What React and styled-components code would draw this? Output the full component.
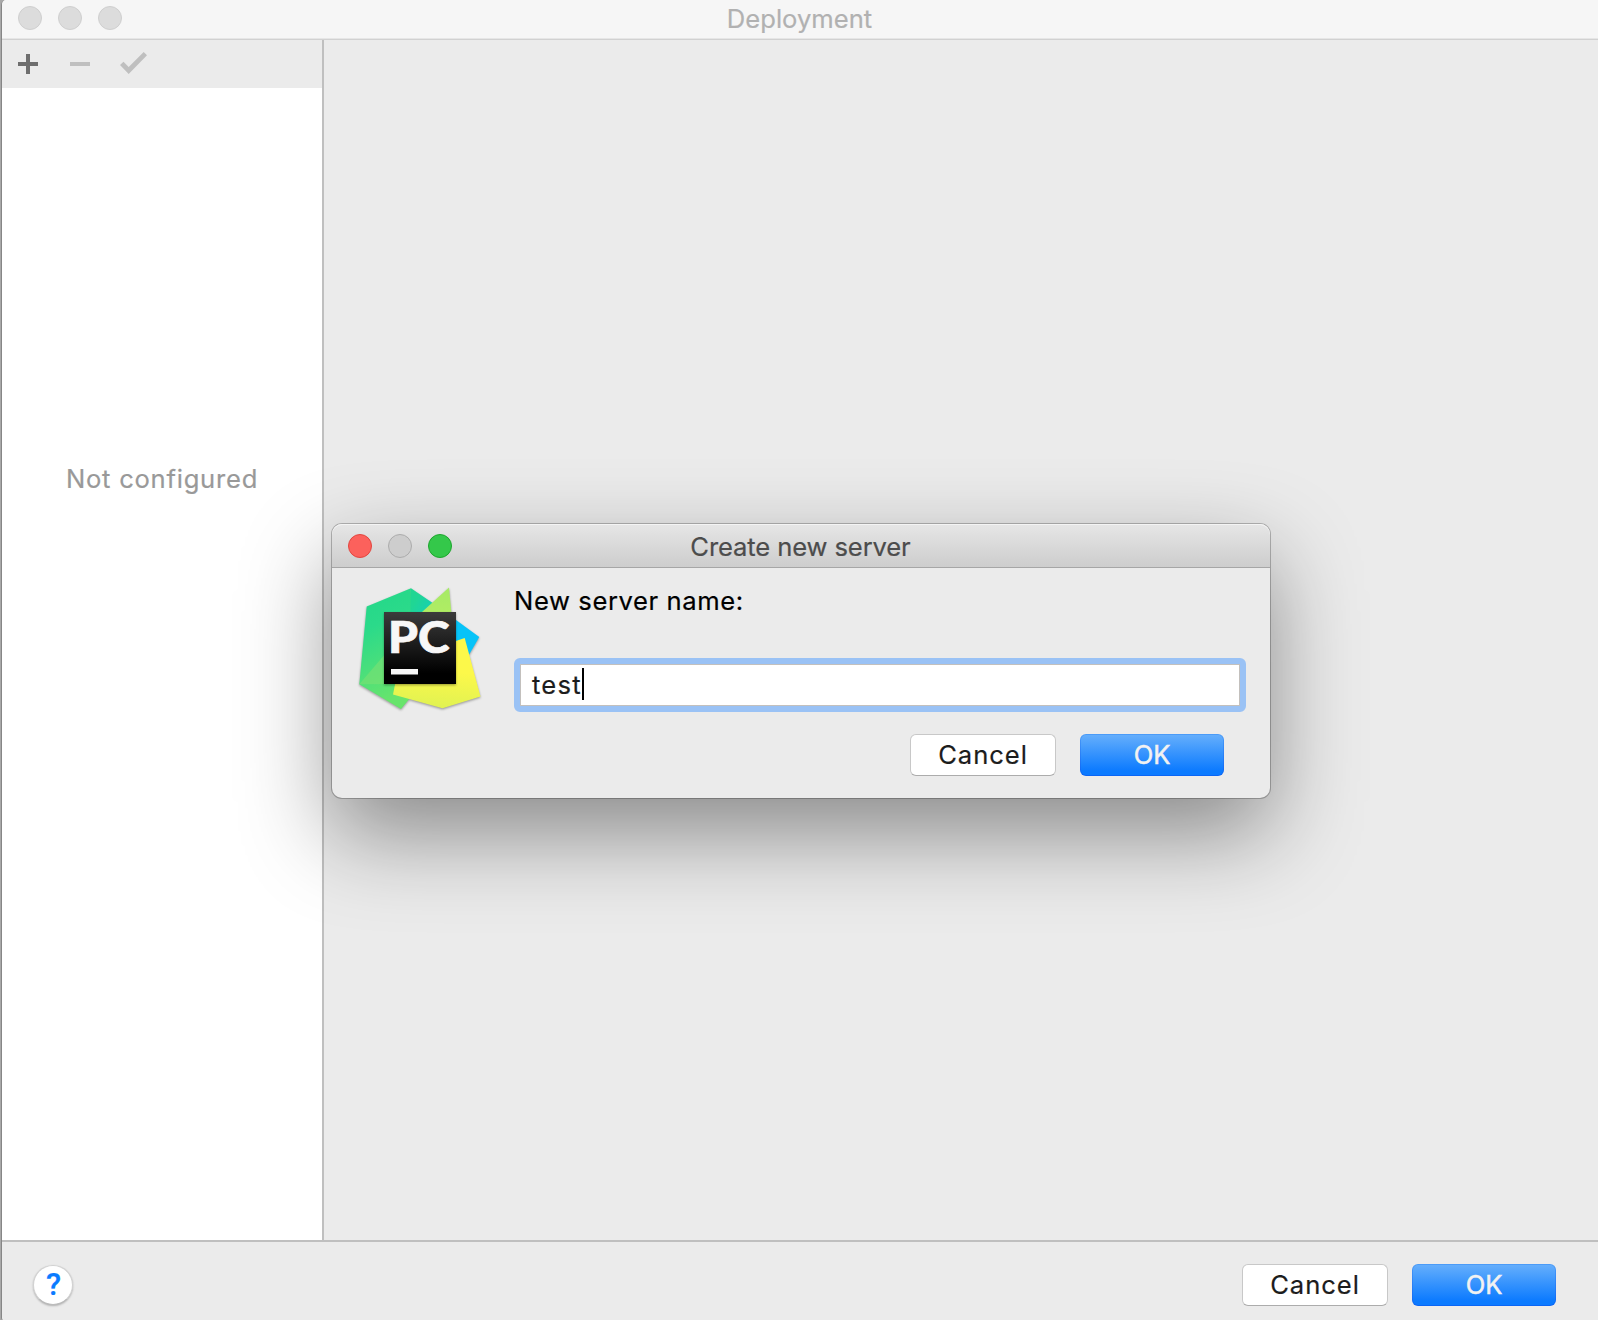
import React from "react";
import styled, { createGlobalStyle, css } from "styled-components";

const GlobalStyle = createGlobalStyle`
  *, *::before, *::after { box-sizing: border-box; }
  body {
    margin: 0;
    background: #a9a9a9;
    font-family: Inter, Roboto, "Liberation Sans", sans-serif;
    font-size: 25.6px;
    font-weight: 400;
    -webkit-text-stroke: 0.2px currentColor;
    color: #000;
    overflow: hidden;
  }
`;

const Desktop = styled.div`
  position: relative;
  height: 1320px;
  padding-left: 1px;
`;

const Window = styled.div`
  display: flex;
  flex-direction: column;
  height: 100%;
  border-left: 1px solid #868686;
  border-radius: 5px 0 0 2px;
  background: #ebebeb;
  overflow: hidden;
`;

const TitleBar = styled.header`
  display: grid;
  grid-template-columns: 1fr auto 1fr;
  align-items: center;
  flex: none;
  height: 40px;
  padding: 0 16px 3px;
  background: #f6f6f6;
  border-bottom: 1px solid #d1d1d1;
  box-shadow: inset 0 -1px 0 #e6e6e6;
`;

const Lights = styled.div`
  display: flex;
  gap: 16px;
`;

const lightColors = {
  inactive: ["#dcdcdc", "#cfcfcf"],
  disabled: ["#cdcdcd", "#acacac"],
  close: ["#fc615c", "#e2463f"],
  zoom: ["#34c84a", "#1da62d"],
};

const Light = styled.span`
  width: 24px;
  height: 24px;
  border-radius: 50%;
  background: ${(p) => lightColors[p.$kind][0]};
  border: 1px solid ${(p) => lightColors[p.$kind][1]};
`;

const Title = styled.h1`
  margin: 0;
  padding: 2px 1px 0 0;
  font-size: 25.6px;
  font-weight: 400;
  line-height: 32px;
  white-space: nowrap;
  letter-spacing: ${(p) => p.$tracking || "0"};
  color: ${(p) => p.$color};
`;

const Content = styled.div`
  display: flex;
  flex: 1;
  min-height: 0;
`;

const Sidebar = styled.aside`
  display: flex;
  flex-direction: column;
  width: 322px;
  background: #fff;
  border-right: 2px solid #bfbfbf;
`;

const Toolbar = styled.div`
  display: flex;
  align-items: center;
  height: 48px;
  padding-left: 13px;
  gap: 22px;
  background: #ebebeb;
`;

const ToolButton = styled.button`
  display: flex;
  padding: 0;
  border: 0;
  background: none;
  color: ${(p) => (p.disabled ? "#bfbfbf" : "#6e6e6e")};
`;

const EmptyText = styled.p`
  margin: 374px 0 0;
  text-align: center;
  line-height: 34px;
  letter-spacing: 0.75px;
  color: #999;
`;

const Footer = styled.footer`
  display: flex;
  align-items: center;
  justify-content: space-between;
  flex: none;
  height: 80px;
  padding: 8px 42px 0 31px;
  border-top: 2px solid #bfbfbf;
`;

const HelpButton = styled.button`
  display: flex;
  align-items: center;
  justify-content: center;
  width: 40px;
  height: 40px;
  padding: 0 0 0 1px;
  border: 1px solid #d2d2d2;
  border-bottom-color: #bbb;
  border-radius: 50%;
  background: #fff;
  box-shadow: 0 1px 2px rgba(0, 0, 0, 0.25);
  font: 500 31px/38px Roboto, Inter, sans-serif;
  color: #0a7bff;
`;

const ButtonRow = styled.div`
  display: flex;
  justify-content: flex-end;
  gap: 24px;
`;

const PushButton = styled.button`
  width: 146px;
  height: 42px;
  padding: 0 0 1px;
  border-radius: 6px;
  border: 1px solid #c8c8c8;
  border-bottom-color: #acacac;
  background: #fff;
  font: 400 25.6px/32px Inter, Roboto, sans-serif;
  letter-spacing: 0.95px;
  -webkit-text-stroke: 0.2px currentColor;
  color: #1c1c1c;
  ${(p) =>
    p.$primary &&
    css`
      width: 144px;
      background: linear-gradient(#64aefc, #0b7aff 90%) padding-box,
        linear-gradient(#4c9cf8, #0964f5) border-box;
      border-color: transparent;
      color: #f2f2f2;
      letter-spacing: -0.2px;
      -webkit-text-stroke-width: 0.5px;
    `}
`;

const Dialog = styled.section`
  position: absolute;
  left: 332px;
  top: 524px;
  width: 938px;
  height: 274px;
  display: flex;
  flex-direction: column;
  border-radius: 10px;
  background: #ebebeb;
  box-shadow: 0 0 0 1px rgba(0, 0, 0, 0.24), 0 35px 90px rgba(0, 0, 0, 0.42);
`;

const DialogBar = styled.header`
  display: grid;
  grid-template-columns: 1fr auto 1fr;
  align-items: center;
  flex: none;
  height: 44px;
  padding: 0 16px;
  border-radius: 10px 10px 0 0;
  border-bottom: 1px solid #a6a6a6;
  background: linear-gradient(#e6e6e6, #cdcdcd);
  box-shadow: inset 0 1px 0 #f4f4f4;
`;

const DialogBody = styled.div`
  display: flex;
  gap: 30px;
  padding: 16px 24px 0 24px;
`;

const Form = styled.form`
  display: flex;
  flex-direction: column;
  width: 732px;
  margin-left: auto;
`;

const Label = styled.label`
  line-height: 34px;
  letter-spacing: 0.6px;
`;

const Field = styled.div`
  display: flex;
  align-items: center;
  height: 54px;
  margin: 40px 0 22px;
  padding: 0 18px 0 12px;
  border: 6px solid #9ac2f5;
  border-radius: 6px;
  background: #fff;
  box-shadow: inset 0 0 0 1px #c3c0bd;
  line-height: 32px;
  letter-spacing: 1.2px;
  color: #1c1c1c;
`;

const Caret = styled.span`
  width: 2px;
  height: 32px;
  margin-bottom: 2px;
  background: #000;
`;

const DialogButtons = styled(ButtonRow)`
  padding-right: 22px;
`;

const Logo = styled.svg`
  flex: none;
  overflow: visible;
`;

function PyCharmLogo() {
  return (
    <Logo width="128" height="128" viewBox="356 584 128 128">
      <defs>
        <linearGradient id="green" x1="0" y1="0" x2="0.25" y2="1">
          <stop offset="0" stopColor="#21d789" />
          <stop offset="0.35" stopColor="#2bda8a" />
          <stop offset="1" stopColor="#68e46c" />
        </linearGradient>
        <linearGradient id="lime" x1="0" y1="0" x2="0" y2="1">
          <stop offset="0" stopColor="#a6ea66" />
          <stop offset="1" stopColor="#b4ee62" />
        </linearGradient>
        <linearGradient id="teal" x1="0" y1="0" x2="1" y2="0.6">
          <stop offset="0" stopColor="#20d68f" />
          <stop offset="0.2" stopColor="#20d694" />
          <stop offset="0.4" stopColor="#16cfb4" />
          <stop offset="0.7" stopColor="#07c3f8" />
        </linearGradient>
        <linearGradient id="yellow" x1="0.4" y1="0" x2="0.3" y2="1">
          <stop offset="0.45" stopColor="#fcf84a" />
          <stop offset="1" stopColor="#dff252" />
        </linearGradient>
        <linearGradient id="black" x1="0" y1="0" x2="0" y2="1">
          <stop offset="0" stopColor="#3b3b3b" />
          <stop offset="0.85" stopColor="#000" />
        </linearGradient>
        <filter id="drop" x="-10%" y="-10%" width="120%" height="125%" colorInterpolationFilters="sRGB">
          <feDropShadow dx="0" dy="1.2" stdDeviation="1" floodOpacity="0.35" />
        </filter>
      </defs>
      <g filter="url(#drop)">
        <path d="M411 588.3 432 602.5 479.3 637 462.5 666 400 680Z" fill="url(#teal)" />
        <path d="M366.7 606.5 411 588.3 409.5 640 420 686 401 709 359.3 684.3Z" fill="url(#green)" />
        <path d="M359.3 684.3 392 646 410 684Z" fill="#78e173" opacity="0.65" />
        <path d="M422 612 449 587.5 452.5 625Z" fill="url(#lime)" />
        <path d="M400 660 464.7 638 480.5 696.5 442.5 708.3 393 694.5Z" fill="url(#yellow)" />
      </g>
      <rect x="384" y="612" width="72" height="72" fill="url(#black)" filter="url(#drop)" />
      <text
        x="388"
        y="652.5"
        fill="#f7f7f7"
        stroke="#f7f7f7"
        strokeWidth="0.7"
        fontFamily="Lato, sans-serif"
        fontWeight="900"
        fontSize="43"
        textLength="61.5"
        lengthAdjust="spacingAndGlyphs"
      >
        PC
      </text>
      <rect x="391" y="669" width="27" height="5.5" fill="#f7f7f7" />
    </Logo>
  );
}

export default function App() {
  return (
    <>
      <GlobalStyle />
      <Desktop>
        <Window>
          <TitleBar>
            <Lights>
              <Light $kind="inactive" />
              <Light $kind="inactive" />
              <Light $kind="inactive" />
            </Lights>
            <Title $color="#b1b1b1">Deployment</Title>
          </TitleBar>
          <Content>
            <Sidebar>
              <Toolbar>
                <ToolButton aria-label="Add">
                  <svg width="30" height="30" viewBox="15 49 30 30" fill="currentColor">
                    <path d="M26 54h4v8h8v4h-8v8h-4v-8h-8v-4h8z" />
                  </svg>
                </ToolButton>
                <ToolButton aria-label="Remove" disabled>
                  <svg width="30" height="30" viewBox="67 49 30 30" fill="currentColor">
                    <path d="M70 62h20v4H70z" />
                  </svg>
                </ToolButton>
                <ToolButton aria-label="Use as default" disabled>
                  <svg width="30" height="30" viewBox="119 49 30 30" fill="currentColor">
                    <path d="M120 65 123.5 61.7 128.7 66.9 143.7 52 147 55.3 128.7 74Z" />
                  </svg>
                </ToolButton>
              </Toolbar>
              <EmptyText>Not configured</EmptyText>
            </Sidebar>
          </Content>
          <Footer>
            <HelpButton aria-label="Help">?</HelpButton>
            <ButtonRow>
              <PushButton>Cancel</PushButton>
              <PushButton $primary>OK</PushButton>
            </ButtonRow>
          </Footer>
        </Window>
        <Dialog>
          <DialogBar>
            <Lights>
              <Light $kind="close" />
              <Light $kind="disabled" />
              <Light $kind="zoom" />
            </Lights>
            <Title $color="#4c4c4c" $tracking="-0.12px">
              Create new server
            </Title>
          </DialogBar>
          <DialogBody>
            <PyCharmLogo />
            <Form onSubmit={(e) => e.preventDefault()}>
              <Label>New server name:</Label>
              <Field>
                test
                <Caret />
              </Field>
              <DialogButtons>
                <PushButton type="button">Cancel</PushButton>
                <PushButton $primary>OK</PushButton>
              </DialogButtons>
            </Form>
          </DialogBody>
        </Dialog>
      </Desktop>
    </>
  );
}
